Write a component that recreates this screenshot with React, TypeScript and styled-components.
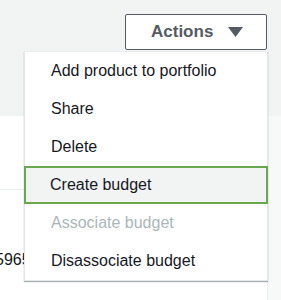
import { FC } from "react";
import styled, { createGlobalStyle } from "styled-components";

const GlobalStyle = createGlobalStyle`
  body {
    margin: 0;
    background: #f2f3f3;
    font-family: 'Liberation Sans', Arial, sans-serif;
  }
`;

const Page = styled.div`
  width: 281px;
  height: 300px;
  overflow: hidden;
  display: flex;
  flex-direction: column;
`;

const Header = styled.header`
  flex-shrink: 0;
  height: 116px;
  padding: 14px 14px 0 0;
  box-sizing: border-box;
  display: flex;
  justify-content: flex-end;
  align-items: flex-start;
`;

const ActionsWrap = styled.div`
  position: relative;
`;

const ActionsButton = styled.button`
  width: 142px;
  height: 36px;
  box-sizing: border-box;
  border: 1px solid #545b64;
  border-radius: 2px;
  background: #fff;
  color: #545b64;
  font-family: inherit;
  font-size: 17px;
  font-weight: 700;
  display: flex;
  align-items: center;
  padding: 0 0 0 25px;
  gap: 15px;
  cursor: pointer;
`;

const Menu = styled.ul`
  position: absolute;
  top: 37px;
  right: -1px;
  width: 242px;
  margin: 0;
  padding: 0;
  list-style: none;
  background: #fff;
  border: 1px solid #e4e6e6;
  border-top: 1px solid #eaeded;
  box-shadow: 0 1px 1px rgba(0, 28, 36, 0.35);
  z-index: 2;
`;

const MenuItem = styled.li<{ $disabled?: boolean; $focused?: boolean }>`
  height: 38px;
  box-sizing: border-box;
  display: flex;
  align-items: center;
  padding-left: ${(p) => (p.$focused ? 24 : 26)}px;
  font-size: 16px;
  color: ${(p) => (p.$disabled ? "#aab7b8" : "#16191f")};
  background: ${(p) => (p.$focused ? "#f2f3f3" : "transparent")};
  border: ${(p) => (p.$focused ? "2px solid #6aa84f" : "none")};
  margin: 0 ${(p) => (p.$focused ? -1 : 0)}px;
`;

const Content = styled.main`
  flex: 1;
  display: flex;
  min-height: 0;
`;

const Panel = styled.section`
  flex: 1;
  background: #fff;
  display: flex;
  flex-direction: column;
`;

const Row = styled.div<{ $height: number }>`
  flex-shrink: 0;
  height: ${(p) => p.$height}px;
  box-sizing: border-box;
  border-bottom: 1px solid #eaeded;
  display: flex;
  align-items: center;
  font-size: 16px;
  color: #16191f;
  white-space: nowrap;
  &:last-child {
    border-bottom: none;
  }
`;

const Cell = styled.span`
  margin-left: -5px;
`;

const SideStrip = styled.div`
  width: 13px;
  background: #f7f8f8;
  border-left: 1px solid #eceeee;
`;

const items = [
  { label: "Add product to portfolio" },
  { label: "Share" },
  { label: "Delete" },
  { label: "Create budget", focused: true },
  { label: "Associate budget", disabled: true },
  { label: "Disassociate budget" },
];

const App: FC = () => {
  return (
    <Page>
      <GlobalStyle />
      <Header>
        <ActionsWrap>
          <ActionsButton>
            Actions
            <svg width="15" height="10" viewBox="0 0 15 10">
              <path d="M0 0 H15 L7.5 10 Z" fill="#545b64" />
            </svg>
          </ActionsButton>
          <Menu>
            {items.map((it) => (
              <MenuItem key={it.label} $disabled={it.disabled} $focused={it.focused}>
                {it.label}
              </MenuItem>
            ))}
          </Menu>
        </ActionsWrap>
      </Header>
      <Content>
        <Panel>
          <Row $height={74} />
          <Row $height={140}>
            <Cell>5965</Cell>
          </Row>
        </Panel>
        <SideStrip />
      </Content>
    </Page>
  );
};

export default App;
